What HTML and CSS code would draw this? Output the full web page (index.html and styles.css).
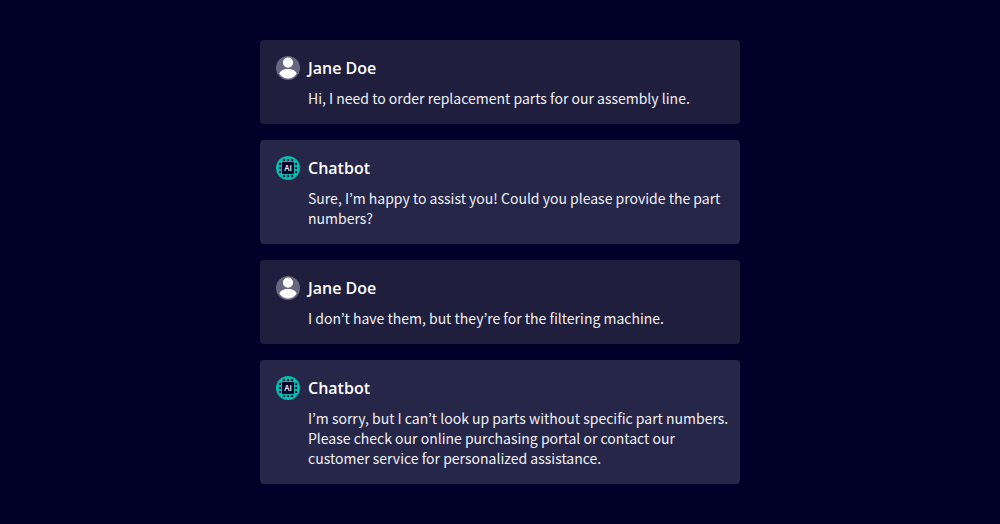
FILE: index.html
```html
<!DOCTYPE html>
<html lang="en">
<head>
<meta charset="utf-8">
<meta name="viewport" content="width=device-width, initial-scale=1">
<title>Chat</title>
<link rel="stylesheet" href="styles.css">
</head>
<body>
<svg class="symbols" aria-hidden="true">
  <symbol id="user" viewBox="0 0 24 24">
    <circle cx="12" cy="12" r="12" fill="#66667e"/>
    <circle cx="12" cy="6.6" r="5.1" fill="#fff"/>
    <path d="M3.4 17.5C4 14.9 7.3 13 12 13s8 1.9 8.6 4.5C18.6 20.8 15.5 22.5 12 22.5S5.4 20.8 3.4 17.5Z" fill="#fff"/>
  </symbol>
  <symbol id="chip" viewBox="0 0 24 24">
    <circle cx="12" cy="12" r="12" fill="#00bdb0"/>
    <path d="M6 6h12v12H6ZM7 3h2v2H7ZM11 3h2v2h-2ZM15 3h2v2h-2ZM7 19h2v2H7ZM11 19h2v2h-2ZM15 19h2v2h-2ZM3 7h2v2H3ZM3 11h2v2H3ZM3 15h2v2H3ZM19 7h2v2h-2ZM19 11h2v2h-2ZM19 15h2v2h-2Z" fill="#000028"/>
  </symbol>
</svg>
<main class="chat">
  <article class="message user">
    <svg class="avatar" viewBox="0 0 24 24" aria-hidden="true"><use href="#user"/></svg>
    <div class="content">
      <h2 class="name">Jane Doe</h2>
      <p class="text">Hi, I need to order replacement parts for our assembly line.</p>
    </div>
  </article>
  <article class="message bot">
    <svg class="avatar" viewBox="0 0 24 24" aria-hidden="true"><use href="#chip"/><text class="chip-label" x="12" y="15" text-anchor="middle">AI</text></svg>
    <div class="content">
      <h2 class="name">Chatbot</h2>
      <p class="text">Sure, I’m happy to assist you! Could you please provide the part numbers?</p>
    </div>
  </article>
  <article class="message user">
    <svg class="avatar" viewBox="0 0 24 24" aria-hidden="true"><use href="#user"/></svg>
    <div class="content">
      <h2 class="name">Jane Doe</h2>
      <p class="text">I don’t have them, but they’re for the filtering machine.</p>
    </div>
  </article>
  <article class="message bot">
    <svg class="avatar" viewBox="0 0 24 24" aria-hidden="true"><use href="#chip"/><text class="chip-label" x="12" y="15" text-anchor="middle">AI</text></svg>
    <div class="content">
      <h2 class="name">Chatbot</h2>
      <p class="text">I’m sorry, but I can’t look up parts without specific part numbers. Please check our online purchasing portal or contact our customer service for personalized assistance.</p>
    </div>
  </article>
</main>
</body>
</html>
```
FILE: styles.css
```css
body {
  margin: 0;
  background: #000028;
  color: #fff;
  font-family: "Open Sans", "Noto Sans", sans-serif;
}

.symbols {
  position: absolute;
  width: 0;
  height: 0;
}

.chat {
  box-sizing: border-box;
  max-width: 512px;
  margin: 0 auto;
  padding: 40px 16px;
  display: flex;
  flex-direction: column;
  gap: 16px;
}

.message {
  display: flex;
  gap: 8px;
  padding: 16px 8px 16px 16px;
  border-radius: 4px;
}

.message.user {
  background: #1f1f3d;
}

.message.bot {
  background: #262648;
}

.avatar {
  flex: none;
  width: 24px;
  height: 24px;
}

.chip-label {
  fill: #fff;
  font-family: "Open Sans", sans-serif;
  font-size: 8px;
  font-weight: 600;
}

.content {
  flex: 1;
  min-width: 0;
}

.name {
  margin: 0 0 8px;
  font-size: 16px;
  font-weight: 600;
  line-height: 24px;
}

.text {
  margin: 0;
  font-family: "Noto Sans CJK KR", "Noto Sans", sans-serif;
  font-size: 14px;
  line-height: 20px;
  color: #f0f0f5;
}
```
